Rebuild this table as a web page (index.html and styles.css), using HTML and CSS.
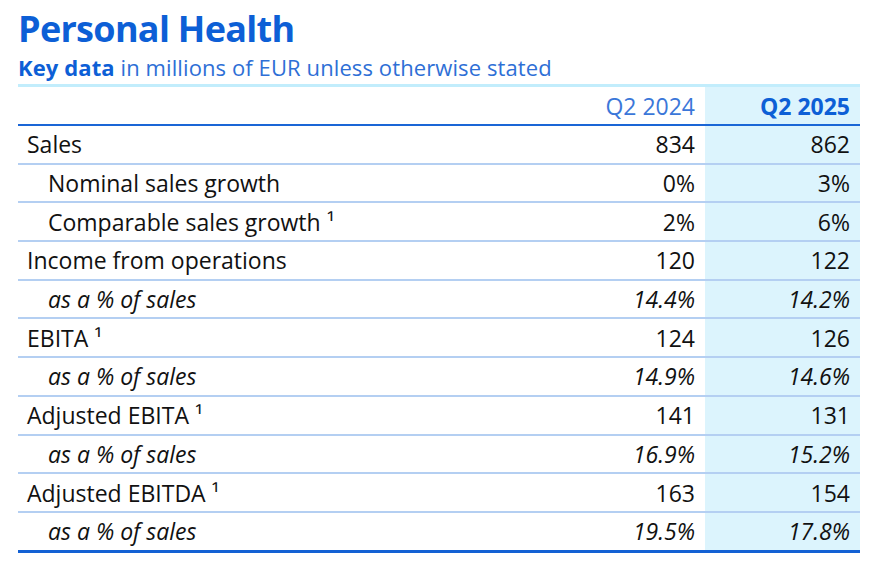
FILE: index.html
```html
<!DOCTYPE html>
<html>
<head>
<meta charset="utf-8">
<link rel="stylesheet" href="styles.css">
</head>
<body>
<div class="page">
  <h1 class="title">Personal Health</h1>
  <div class="subtitle"><b>Key data</b> in millions of EUR unless otherwise stated</div>
  <table class="data">
    <thead>
      <tr>
        <th class="label"></th>
        <th class="num prev">Q2 2024</th>
        <th class="num cur">Q2 2025</th>
      </tr>
    </thead>
    <tbody>
      <tr><td class="label">Sales</td><td class="num">834</td><td class="num cur">862</td></tr>
      <tr><td class="label sub">Nominal sales growth</td><td class="num">0%</td><td class="num cur">3%</td></tr>
      <tr><td class="label sub">Comparable sales growth ¹</td><td class="num">2%</td><td class="num cur">6%</td></tr>
      <tr><td class="label">Income from operations</td><td class="num">120</td><td class="num cur">122</td></tr>
      <tr class="it"><td class="label sub">as a % of sales</td><td class="num">14.4%</td><td class="num cur">14.2%</td></tr>
      <tr><td class="label">EBITA ¹</td><td class="num">124</td><td class="num cur">126</td></tr>
      <tr class="it"><td class="label sub">as a % of sales</td><td class="num">14.9%</td><td class="num cur">14.6%</td></tr>
      <tr><td class="label">Adjusted EBITA ¹</td><td class="num">141</td><td class="num cur">131</td></tr>
      <tr class="it"><td class="label sub">as a % of sales</td><td class="num">16.9%</td><td class="num cur">15.2%</td></tr>
      <tr><td class="label">Adjusted EBITDA ¹</td><td class="num">163</td><td class="num cur">154</td></tr>
      <tr class="it last"><td class="label sub">as a % of sales</td><td class="num">19.5%</td><td class="num cur">17.8%</td></tr>
    </tbody>
  </table>
</div>
</body>
</html>
```
FILE: styles.css
```css
html, body {
  margin: 0;
  padding: 0;
  background: #ffffff;
}
.page {
  padding: 8px 18px 0 18px;
  width: 842px;
  font-family: "Open Sans", "Noto Sans", sans-serif;
}
.title {
  margin: 0;
  font-size: 36px;
  line-height: 42px;
  font-weight: 700;
  color: #0d5fd6;
  letter-spacing: -0.7px;
}
.subtitle {
  font-size: 22px;
  line-height: 34px;
  color: #2e6fd6;
  letter-spacing: 0.1px;
  border-bottom: 3px solid #c2edfc;
}
.subtitle b {
  color: #0d5fd6;
  font-weight: 700;
}
.data {
  width: 842px;
  border-collapse: collapse;
  font-size: 23px;
  color: #111111;
}
.data th, .data td {
  padding: 0 10px 0 9px;
  height: 36.7px;
  line-height: 26px;
  vertical-align: middle;
}
.data thead th {
  height: 37px;
  border-bottom: 2px solid #1a66d6;
  font-weight: 400;
  color: #3b77d9;
}
.data thead th.cur {
  font-weight: 700;
  color: #0d5fd6;
}
.data tbody td {
  border-bottom: 2px solid #b4cff2;
}
.data tbody tr.last td {
  border-bottom: 3px solid #1361d4;
}
.data .num {
  text-align: right;
}
.data .prev, .data td.num:not(.cur) {
  width: 140px;
}
.data .cur {
  width: 136px;
  background: #dcf4fd;
}
.data .label.sub {
  padding-left: 30px;
}
.data tr.it td {
  font-style: italic;
}
```
